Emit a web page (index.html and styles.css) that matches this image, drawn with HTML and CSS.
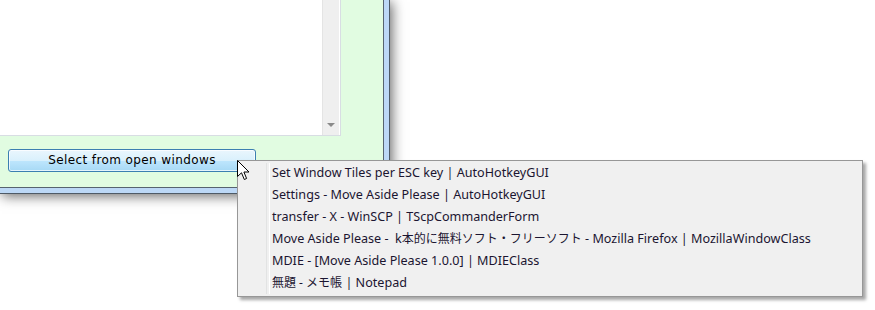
FILE: index.html
```html
<!DOCTYPE html>
<html lang="ja">
<head>
<meta charset="UTF-8" />
<title>Move Aside Please</title>
<link rel="stylesheet" href="styles.css">
</head>
<body>

<div class="frame">
  <div class="client">
    <div class="listbox">
      <div class="list-area"></div>
      <div class="scrollbar">
        <div class="track"></div>
        <div class="arrow-btn"><span class="arrow"></span></div>
      </div>
    </div>
    <div class="button-row">
      <button class="btn-select">Select from open windows</button>
    </div>
  </div>
</div>

<!-- Menu de janelas abertas -->
<div class="popup-menu">
  <div class="menu-row">Set Window Tiles per ESC key | AutoHotkeyGUI</div>
  <div class="menu-row">Settings - Move Aside Please | AutoHotkeyGUI</div>
  <div class="menu-row">transfer - X - WinSCP | TScpCommanderForm</div>
  <div class="menu-row">Move Aside Please -&nbsp; k<span class="ja">本的に無料ソフト・フリーソフト</span> - Mozilla Firefox | MozillaWindowClass</div>
  <div class="menu-row">MDIE - [Move Aside Please 1.0.0] | MDIEClass</div>
  <div class="menu-row"><span class="ja">無題 - メモ帳</span> | Notepad</div>
</div>

<svg class="cursor" width="14" height="22" viewBox="0 0 14 22">
  <path d="M0.5 0.5 L0.5 16.5 L4.5 12.8 L7.3 19.5 L9.6 18.5 L6.9 12 L12 12 Z" fill="#fff" stroke="#000" stroke-width="1" stroke-linejoin="miter"/>
</svg>

</body>
</html>
```

FILE: styles.css
```css
* {
  box-sizing: border-box;
}
body {
  margin: 0;
  background: #ffffff;
  font-family: 'Noto Sans', 'Noto Sans CJK JP', sans-serif;
  width: 875px;
  height: 310px;
  overflow: hidden;
  position: relative;
}

/* Janela */
.frame {
  width: 390px;
  height: 194px;
  background: #bcd8f6;
  border-right: 1px solid #4e5a66;
  border-bottom: 1px solid #4e5a66;
  padding: 0 5px 5px 0;
  box-shadow: 2px 2px 12px rgba(0,0,0,0.6);
}
.client {
  width: 384px;
  height: 188px;
  background: #e1fce1;
  border-right: 1px solid #56636f;
  border-bottom: 1px solid #56636f;
}

/* Lista */
.listbox {
  width: 341px;
  height: 136px;
  background: #fff;
  border-right: 1px solid #d8dde3;
  border-bottom: 1px solid #d8dde3;
  display: flex;
  justify-content: flex-end;
}
.scrollbar {
  width: 17px;
  display: flex;
  flex-direction: column;
  background: #efefef;
  border-left: 1px solid #e4e4e4;
  margin-right: 1px;
}
.track {
  flex-grow: 1;
}
.arrow-btn {
  height: 17px;
  display: flex;
  align-items: center;
  justify-content: center;
  padding-bottom: 3px;
}
.arrow {
  width: 0;
  height: 0;
  border-left: 4px solid transparent;
  border-right: 4px solid transparent;
  border-top: 4px solid #8a8a8a;
}

/* Botão */
.button-row {
  padding: 11px 0 0 8px;
}
.btn-select {
  width: 248px;
  height: 23px;
  border: 1px solid #3c7fb1;
  border-radius: 3px;
  background: linear-gradient(#eaf6fd 0%, #d9f0fc 50%, #bee6fd 51%, #a7d9f5 100%);
  box-shadow: inset 0 0 0 1px rgba(255,255,255,0.7);
  font-family: 'DejaVu Sans', sans-serif;
  font-size: 12px;
  letter-spacing: 0.4px;
  color: #000;
  padding: 0;
}

/* Menu popup */
.popup-menu {
  position: absolute;
  left: 237px;
  top: 160px;
  width: 626px;
  height: 137px;
  background: #f0f0f0;
  border: 1px solid #979797;
  box-shadow: 3px 3px 3px rgba(0,0,0,0.35);
  padding: 1px 0 0 34px;
  font-size: 12.6px;
  color: #1b1530;
}
.popup-menu::before {
  content: '';
  position: absolute;
  left: 28px;
  top: 2px;
  bottom: 2px;
  width: 2px;
  border-left: 1px solid #e2e3e3;
  border-right: 1px solid #ffffff;
}
.menu-row {
  height: 22px;
  line-height: 22px;
  white-space: nowrap;
}
.ja {
  font-size: 12px;
}

.cursor {
  position: absolute;
  left: 237px;
  top: 160px;
}
```
